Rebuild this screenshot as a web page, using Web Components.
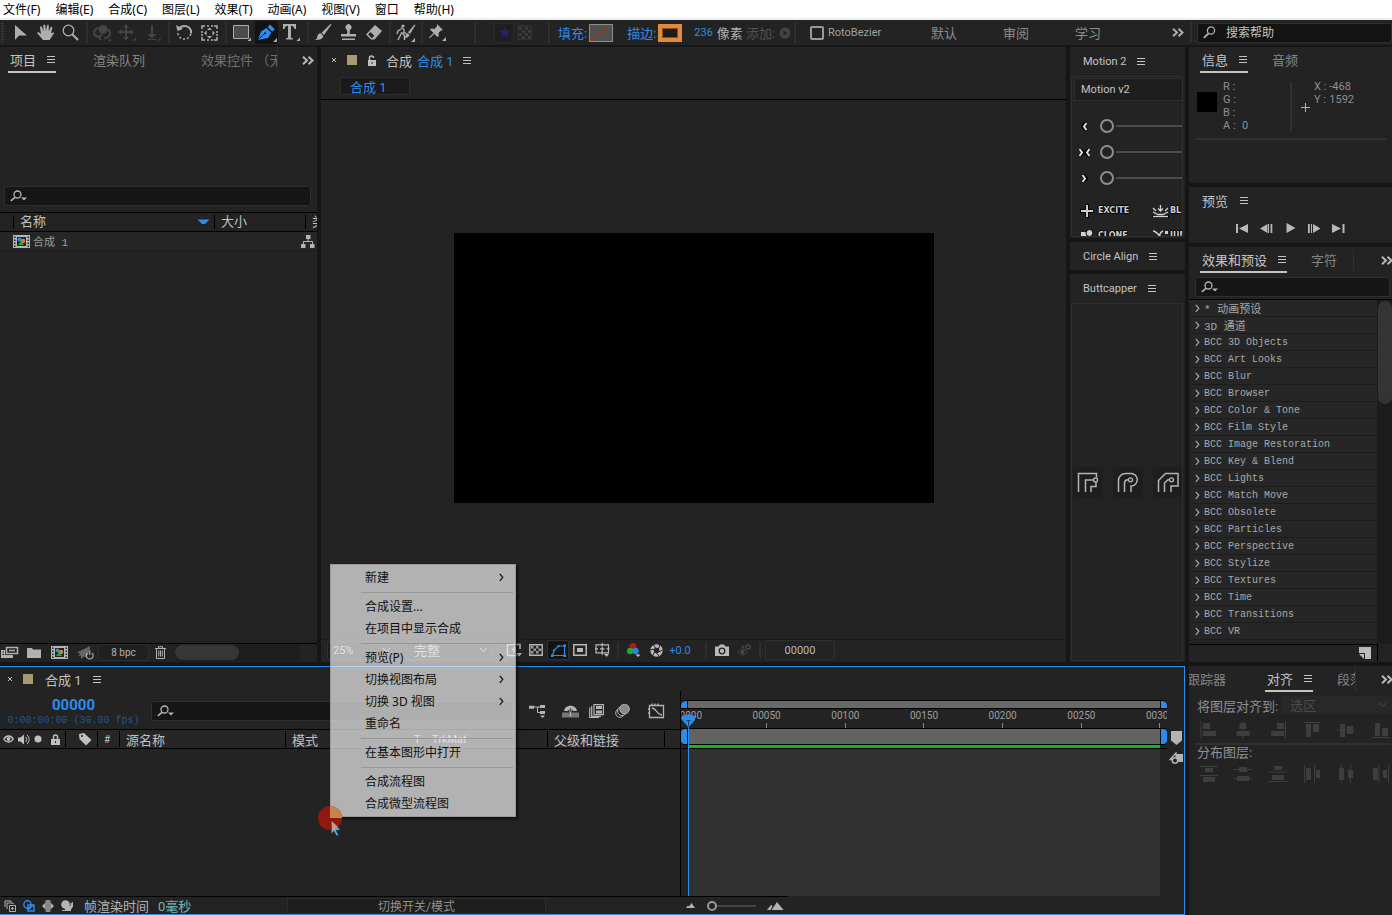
<!DOCTYPE html>
<html lang="zh-CN">
<head>
<meta charset="utf-8">
<title>合成 1</title>
<style>
html,body{margin:0;height:100%;background:#161616}
body{font-family:Roboto,"Noto Sans CJK SC",sans-serif;font-size:13px;color:#c0c0c0;overflow:hidden}
</style>
</head>
<body>
<ae-app></ae-app>
<script>
const BASE = `
*{box-sizing:border-box}
button,select,input{font:inherit;color:inherit;margin:0;padding:0;border:0;background:none;border-radius:0;outline:none}
button{display:inline-flex;align-items:center;justify-content:center;white-space:nowrap}
select{appearance:none}
`;

/* Every icon: [width, height, svg body], drawn on the pixel grid in currentColor */
const ICONS = {
  menu:[9,9,'<path d="M0 1.5h8M0 4.500h8M0 7.500h8" stroke="currentColor" fill="none"/>'],
  more:[12,9,'<path d="M1 .8l4 3.700-4 3.700M6.500 .8l4 3.700-4 3.700" stroke="currentColor" stroke-width="2" fill="none"/>'],
  close:[6,6,'<path d="M1 1l4 4M5 1l-4 4" stroke="currentColor" fill="none"/>'],
  lockopen:[10,11,'<path d="M2.500 5.500V3a2 2 0 014 0" stroke="currentColor" stroke-width="1.500" fill="none"/><path d="M1 5h8v6H1z" fill="currentColor"/><path d="M4.500 7h1v2h-1z" fill="#222"/>'],
  arrow:[14,18,'<path d="M1 1v15l4-4.500 8 0z" fill="currentColor"/>'],
  hand:[18,17,'<path d="M6 16c-2-2-4-5-6-7 1-1.500 2-1 4 1L3 3.500C3 2 4.500 2 5 3.200L6.500 7 6.300 1.500C6.500 0 8 0 8.300 1.500L9 7l1-5.500c.4-1.300 1.800-1 1.900.3L11.700 7.500l1.800-4c.5-1.200 2-.8 1.800.5L14 9.500c1-1 2.500-1.500 3.500-.5-2 1.500-3 5-5 7z" fill="currentColor"/>'],
  zoom:[17,17,'<circle cx="6.500" cy="6.500" r="5.300" stroke="currentColor" stroke-width="1.300" fill="none"/><path d="M10.500 10.500l5.500 5.500" stroke="currentColor" stroke-width="2"/>'],
  orbit:[19,17,'<circle cx="10" cy="5.500" r="4.500" fill="currentColor"/><path d="M5 4C-1 7 0 12 6 13l2-2M14 5c5 3 4 8-3 9.500M8 16l-2-3 3-2" stroke="currentColor" stroke-width="2" fill="none"/><path d="M18 14v3h-3z" fill="currentColor"/>'],
  pan:[19,17,'<path d="M8 0l3 3.500H9V7h3.500V5L16 8l-3.500 3V9H9v4h2l-3 3.500L5 13h2V9H3.500v2L0 8l3.500-3v2H7V3.500H5zM18 13.500v3h-3z" fill="currentColor"/>'],
  dolly:[17,17,'<path d="M7 1l2 0v9h3.500L8 14.500 3.500 10H7zM4 15h8v1H4zM16.500 13.500v3h-3z" fill="currentColor"/>'],
  rotate:[17,17,'<path d="M3.500 4A7 7 0 0115 6.500a7 7 0 010 3" stroke="currentColor" stroke-width="2" fill="none"/><path d="M0 1l1.500 6 5.500-2z" fill="currentColor"/><path d="M14.700 10A6.500 6.500 0 012 10V8" stroke="currentColor" stroke-width="1.500" stroke-dasharray="2 2" fill="none"/>'],
  anchor:[17,16,'<path d="M1 4V1h3M13 1h3v3M16 12v3h-3M4 15H1v-3M6 1h2M10 1h2M6 15h2M10 15h2M1 6v2M1 9v2M16 6v2M16 9v2" stroke="currentColor" stroke-width="1.500" fill="none"/><path d="M8.500 2.500L11 5H6zM8.500 13.500L11 11H6zM3 8l2.500-2.500v5zM14 8l-2.500-2.500v5z" fill="currentColor"/>'],
  rect:[19,17,'<path d="M1.500 1.500h15v13h-15z" fill="#4c4c4c" stroke="currentColor"/><path d="M19 13.500V17h-3.500z" fill="currentColor"/>'],
  pen:[20,18,'<path d="M1 16L4 7.500 9.500 4l4.800 4.800L11 14z" fill="currentColor"/><path d="M10.500 3L13 .5l4.800 4.800-2.500 2.500z" fill="currentColor"/><path d="M1.500 15.500L7 10" stroke="#131313" stroke-width=".8"/><circle cx="8" cy="9.300" r="1.100" fill="#131313"/><path d="M20 14v4h-4z" fill="#aaa"/>'],
  text:[19,17,'<path d="M1 0h13v5h-1.500C12 2.500 11 1.800 9 1.800V13c0 1 .7 1.200 2 1.300V15.500H4V14.300c1.300-.1 2-.3 2-1.300V1.800C4 1.800 3 2.500 2.500 5H1zM18 13.500V17h-3.500z" fill="currentColor"/>'],
  brush:[17,17,'<path d="M16.500.5L9 11l-2.500-2.300L15.500 0zM6 9.500L8.300 12c-.5 3-3.500 4-8.300 4 2-1 2-2 2.500-4C3 10 4.500 9 6 9.500z" fill="currentColor"/>'],
  stamp:[17,17,'<path d="M6.500 5.500a3 3 0 114 0c-1 1-1 3-.5 4.500H16v2.500H1V10h6c.5-1.500.5-3.500-.5-4.500zM2 14.500h13V16H2z" fill="currentColor"/>'],
  eraser:[18,17,'<path d="M10 1l7 6-7.500 8.500H6L1 10.500z" fill="currentColor"/><path d="M3 10.500L5.500 8l3.800 3.700-2.300 2.500z" fill="#252525"/>'],
  roto:[20,18,'<path d="M5 3.500l3 2v3l2 1M5 5L2 7l-1 3M6 8l-2 4-2 4M6.500 9l2 3v4" stroke="currentColor" stroke-width="1.400" fill="none"/><circle cx="7" cy="2" r="1.600" fill="currentColor"/><path d="M19.500 1L14 10l-2-1.800L18.500.5zM11.500 9l2 2c-.5 2-2.500 3-5 3 1.500-2 1-4.500 3-5zM19 14v4h-4z" fill="currentColor"/>'],
  pin:[18,17,'<path d="M8 0l6 6-2 .5-2.500 2.500.3 3L8.500 13 5.300 9.700 1 14l-1 0 .4-1L4.500 9 1 5.500 2.500 4.500l3 .4L8 2.300zM17 13v4h-4z" fill="currentColor"/>'],
  star:[11,12,'<path d="M5.500 0l1.600 3.800 3.900.3-3 2.700.9 4.200-3.400-2.200L2.100 11 3 6.800 0 4.100l3.900-.3z" fill="#23236a"/>'],
  checkdim:[15,15,'<path d="M1 1h13v13H1z" fill="none" stroke="#3a3a3a"/><path d="M2 2h3v3H2zM8 2h3v3H8zM5 5h3v3H5zM11 5h3v3h-3zM2 8h3v3H2zM8 8h3v3H8zM5 11h3v3H5zM11 11h3v3h-3z" fill="#3a3a3a"/>'],
  add:[12,12,'<circle cx="6" cy="6" r="5.500" fill="#434343"/><path d="M4.500 3.500v5l4-2.500z" fill="#222"/>'],
  search:[13,13,'<circle cx="8" cy="4.500" r="3.600" stroke="currentColor" stroke-width="1.300" fill="none"/><path d="M5.500 7.500L.8 11.800" stroke="currentColor" stroke-width="1.800"/>'],
  searchdrop:[18,12,'<circle cx="7.500" cy="4.500" r="3.500" stroke="currentColor" stroke-width="1.300" fill="none"/><path d="M5 7.300L.8 10.800" stroke="currentColor" stroke-width="1.600"/><path d="M11 7.500h6l-3 3z" fill="currentColor"/>'],
  sort:[13,6,'<path d="M.5 .5h12l-4.500 4.500h-3z" fill="#2d8ceb"/>'],
  comp:[17,13,'<path d="M0 0h17v13H0z" fill="#b5b5b5"/><path d="M1 1.500h1.500v1.500H1zM1 4.500h1.500V6H1zM1 7.500h1.500V9H1zM1 10.500h1.500V12H1zM14.500 1.500H16v1.500h-1.500zM14.500 4.500H16V6h-1.500zM14.500 7.500H16V9h-1.500zM14.500 10.500H16V12h-1.500zM4 2h9v9H4z" fill="#222"/><circle cx="6.500" cy="4.500" r="2" fill="#2d8ceb"/><circle cx="10" cy="6" r="2.300" fill="#e07838"/><path d="M5 10l3-4 3 4z" fill="#10b520"/>'],
  flow:[14,13,'<path d="M5 0h4.500v4H5zM0 9h4.500v4H0zM9 9h4.500v4H9z" fill="currentColor"/><path d="M7 4v3M2.500 9V6.500h9V9" stroke="currentColor" fill="none"/>'],
  interpret:[18,13,'<path d="M5.500 1.500h11v6h-11zM8 4.500h6" stroke="currentColor" stroke-width="1.600" fill="none"/><path d="M0 4h4v5h8v3H0z" fill="currentColor"/><path d="M1.500 6H3M1.500 8.500H3" stroke="#222"/>'],
  folder:[14,11,'<path d="M0 1h5l1 1.500h8V11H0z" fill="currentColor"/>'],
  rocket:[18,14,'<path d="M13 0L3 5 0 6l3 2-2 2 3-.5L4 13l3-2.500L9 11C12 8 13 4 13 0z" fill="#666"/><path d="M10.500 7a3.400 3.400 0 104.500 0M12.800 4.500v4.500" stroke="#aaa" stroke-width="1.200" fill="none"/>'],
  trash:[12,13,'<path d="M0 2.500h11M3.500 2V.7h4V2M1.500 3v9.500h8V3M3.800 4.500v6M5.500 4.500v6M7.300 4.500v6" stroke="currentColor" fill="none"/>'],
  chev:[9,6,'<path d="M.8 .8l3.700 3.700L8.200 .8" stroke="currentColor" fill="none"/>'],
  right:[5,9,'<path d="M.8 .8l3 3.500-3 3.500" stroke="currentColor" stroke-width="1.200" fill="none"/>'],
  fast:[17,14,'<path d="M14 6V1.500H1.500v11H11" stroke="currentColor" stroke-width="1.500" fill="none"/><path d="M9 3L5 7.500h2.500L7 11l4-4.500H8.500zM10 10h6l-3 3.500z" fill="currentColor"/>'],
  checker:[14,12,'<path d="M.8.800h12.400v10.400H.8z" fill="none" stroke="currentColor" stroke-width="1.400"/><path d="M2 2h2.500v2.500H2zM7 2h2.500v2.500H7zM4.500 4.500H7V7H4.500zM9.500 4.500H12V7H9.500zM2 7h2.500v2.500H2zM7 7h2.500v2.500H7z" fill="#999"/>'],
  mask:[15,13,'<path d="M1.500 11.500L3 6.500 7.500 2H13.500v9.500z" stroke="#2d8ceb" stroke-width="1.200" fill="none"/><path d="M0 10.500h2.500V13H0zM2 5.500h2V7.500H2zM6.500 1h2v2h-2zM12.500 .5H15V3h-2.500zM12.500 10.500H15V13h-2.500z" fill="#2d8ceb"/>'],
  safe:[14,12,'<path d="M.8.800h12.400v10.400H.8z" fill="none" stroke="currentColor" stroke-width="1.500"/><path d="M4 4h6v4H4z" fill="currentColor"/>'],
  grid:[15,15,'<path d="M1 1.800h12.500v8H1zM7.200 0v3.500M7.200 7.500V12M0 5.800h3M11.500 5.800h3M5 5.800h4.500M7.200 4v4" stroke="currentColor" stroke-width="1.200" fill="none"/><path d="M9 11h5l-2.500 3z" fill="currentColor"/>'],
  rgb:[14,14,'<circle cx="6" cy="3.500" r="3.400" fill="#b01c10"/><circle cx="3.200" cy="8" r="3.200" fill="#10b520"/><circle cx="8.500" cy="8" r="3.200" fill="#2d80e0"/><path d="M8.500 11.500h5l-2.500 2.500z" fill="#ccc"/>'],
  aperture:[13,13,'<circle cx="6.500" cy="6.500" r="4.500" stroke="currentColor" stroke-width="3.400" fill="none"/><path d="M3 .5l3 4M10 .5L8.500 5M12.500 6L8.500 8M9.500 12.500l-3-3.500M2.500 12l2-4M0 6l4.500-1" stroke="#232323"/>'],
  camera:[14,12,'<path d="M0 2.500h3.500L5 .5h4l1.500 2H14V12H0z" fill="currentColor"/><circle cx="7" cy="7" r="2.800" fill="none" stroke="#232323" stroke-width="1.300"/>'],
  eyecam:[14,13,'<path d="M1 8c3-4 7-4 9 0-2 4-6 4-9 0z" stroke="#484848" fill="none"/><circle cx="5.500" cy="8" r="2" fill="#484848"/><circle cx="11" cy="3" r="2" fill="none" stroke="#484848" stroke-width="1.500"/><circle cx="6" cy="3" r="1.500" fill="#404040"/>'],
  mleft:[7,9,'<path d="M5.500 .5L2 4.500l3.500 4" stroke="#000" stroke-width="4" fill="none"/><path d="M5.500 1L3 4.500l2.500 3.500" stroke="#ddd" stroke-width="2" fill="none"/>'],
  mright:[7,9,'<path d="M1.500 .5L5 4.500l-3.500 4" stroke="#000" stroke-width="4" fill="none"/><path d="M1.500 1L4 4.500l-2.500 3.500" stroke="#ddd" stroke-width="2" fill="none"/>'],
  mboth:[13,9,'<path d="M1.500 .5L5 4.500l-3.500 4M11.500 .5L8 4.500l3.500 4" stroke="#000" stroke-width="3.500" fill="none"/><path d="M1.500 1L4 4.500l-2.500 3.500M11.500 1L9 4.500l2.500 3.500" stroke="#ddd" stroke-width="2" fill="none"/>'],
  plus:[14,14,'<path d="M7 0v14M0 7h14" stroke="#000" stroke-width="4"/><path d="M7 1v12M1 7h12" stroke="#d0d0d0" stroke-width="2"/>'],
  blend:[17,14,'<path d="M0 11h17v3H0z" fill="#000"/><path d="M1 12.500h15M8.500 1v6M6 4.500L8.500 7 11 4.500M1 4l3 3M16 4l-3 3M1 8l5 2.500h5L16 8" stroke="#d0d0d0" stroke-width="1.300" fill="none"/>'],
  clone:[14,14,'<path d="M1 3h6v8H1z" fill="#d0d0d0"/><circle cx="9.500" cy="4" r="3.500" fill="#d0d0d0" stroke="#000"/>'],
  jump:[17,14,'<path d="M1 2c4 0 6 6 12 8M6 8c2-2 2-5 5-6" stroke="#d0d0d0" stroke-width="1.500" fill="none"/><path d="M13 2h3v3h-3z" fill="#d0d0d0"/>'],
  cap1:[22,22,'<path d="M1.500 21V2.500h18v4M19 10.500v5h-5V21M8.500 21V9h8" stroke="currentColor" stroke-width="1.500" fill="none"/><circle cx="18.500" cy="9" r="2" stroke="currentColor" stroke-width="1.300" fill="#1e1e1e"/>'],
  cap2:[22,22,'<path d="M1.500 21V9.500A7 7 0 018.500 2.500H14a6.200 6.200 0 010 12.500V21M7.500 21V12A3.500 3.500 0 0111 8.800" stroke="currentColor" stroke-width="1.500" fill="none"/><circle cx="13.500" cy="8.800" r="2" stroke="currentColor" stroke-width="1.300" fill="#1e1e1e"/>'],
  cap3:[22,22,'<path d="M1.500 21V9.500l7-7h12.500v12.500h-7V21M7.500 21V12l3.500-3.200h1" stroke="currentColor" stroke-width="1.500" fill="none"/><circle cx="14.500" cy="8.800" r="2" stroke="currentColor" stroke-width="1.300" fill="#1e1e1e"/>'],
  first:[13,9,'<path d="M0 0h2v9H0zM12 0v9L3 4.500z" fill="currentColor"/>'],
  prev:[13,9,'<path d="M0 4.500L7.500 0v9zM8 0h1v9H8zM10.500 0h1.800v9h-1.800z" fill="currentColor"/>'],
  play:[10,10,'<path d="M.5 0v10L9.500 5z" fill="currentColor"/>'],
  next:[13,9,'<path d="M12.500 4.500L5 0v9zM3 0h1v9H3zM0 0h1.800v9H0z" fill="currentColor"/>'],
  last:[13,9,'<path d="M10.500 0h2v9h-2zM0 0v9l9-4.500z" fill="currentColor"/>'],
  newbin:[12,12,'<path d="M0 0h12v12H6V6H0z" fill="currentColor"/><path d="M0 7l5 0 0 5z" fill="currentColor"/>'],
  cross:[9,9,'<path d="M4.500 0v9M0 4.500h9" stroke="currentColor" fill="none"/>'],
  eye:[11,8,'<path d="M.8 4c2.500-4 7-4 9.400 0-2.400 4-6.900 4-9.400 0z" stroke="currentColor" stroke-width="1.300" fill="none"/><circle cx="5.500" cy="4" r="1.900" fill="currentColor"/>'],
  sound:[12,11,'<path d="M0 3.500h2.500L6 .5v10L2.500 7.500H0z" fill="currentColor"/><path d="M7.500 3c1.500 1.500 1.500 3.500 0 5M9 1c2.800 2.500 2.800 6.500 0 9" stroke="currentColor" fill="none"/>'],
  dot:[8,8,'<circle cx="4" cy="4" r="3.500" fill="currentColor"/>'],
  lock:[9,11,'<path d="M2.500 5V3a2 2 0 014 0v2" stroke="currentColor" stroke-width="1.500" fill="none"/><path d="M0 5h9v6H0z" fill="currentColor"/><path d="M4 7h1v2H4z" fill="#222"/>'],
  tag:[13,13,'<path d="M0 1l5-1 7.500 7-5.500 5.500L.5 6z" fill="currentColor"/><circle cx="3" cy="3" r="1" fill="#222"/>'],
  tree:[17,13,'<path d="M0 .8h5v3H0zM11 0h5v3h-5zM11 6h5v3h-5zM11 10.500h5L13.500 13z" fill="currentColor"/><path d="M5 2h6M8.500 2v5.500H11" stroke="currentColor" fill="none"/>'],
  shy:[17,13,'<path d="M0 7.500h7v5H0zM10 7.500h7v5h-7zM0 9.500h17v3H0z" fill="#777"/><path d="M2 6C3 -1 14 -1 15 6H11L9.500 4v7h-2V4L6 6z" fill="currentColor"/><path d="M8.500 3v4" stroke="#232323" stroke-width=".6"/>'],
  frames:[15,14,'<path d="M5 .6h9.400v10H5z" fill="none" stroke="currentColor" stroke-width="1.200"/><path d="M7 2h6v3H7zM7 6.500h6v3H7z" fill="currentColor"/><path d="M2.700 2v10.300H12M.7 3.500v10H10" stroke="currentColor" stroke-width="1.200" fill="none"/>'],
  blur:[15,14,'<circle cx="5" cy="9" r="4.300" stroke="currentColor" fill="none"/><circle cx="7" cy="7" r="4.500" fill="#232323" stroke="currentColor"/><circle cx="9.500" cy="5" r="4.800" fill="#8a8a8a" stroke="currentColor"/>'],
  graph:[17,16,'<path d="M1.500 2.500h14v12h-14zM4 5c4 0 5 7 10 7M4 .5v2M7 .5v2M10 .5v2M0 6h2M0 10h2" stroke="currentColor" stroke-width="1.300" fill="none"/>'],
  marker:[11,14,'<path d="M0 0h11v9.500L5.500 14 0 9.500z" fill="currentColor"/>'],
  comptn:[14,12,'<path d="M7 2h7v8H7z" fill="currentColor"/><path d="M7 1L1 7.500h6z" fill="#232323" stroke="currentColor" stroke-width="1.300"/><circle cx="6" cy="8.500" r="2.700" fill="#232323" stroke="currentColor" stroke-width="1.500"/>'],
  head:[13,14,'<path d="M0 1.500h4L6.500 0 9 1.500h4V6L6.500 13.500 0 6z" fill="#2d8ceb"/><path d="M4.500 6.500h4M6.500 6.500v6" stroke="#173f6a"/>'],
  sw1:[12,12,'<path d="M1 7V1h6v1M3 9V3h6v1M5.500 5.500h6v6h-6zM8.500 7v3M7 8.500h3" stroke="currentColor" fill="none"/>'],
  sw2:[12,12,'<circle cx="4.500" cy="4.500" r="3.700" stroke="#2d8ceb" stroke-width="1.400" fill="none"/><path d="M5 5h6v6H5z" stroke="#2d8ceb" stroke-width="1.400" fill="none"/><path d="M5 11V9l4-4h2z" fill="#2d8ceb"/>'],
  sw3:[12,12,'<path d="M3.500 0h5v12h-5z" fill="#8a8a8a"/><path d="M0 6l3.500-3.500v7zM12 6L8.500 2.500v7z" fill="currentColor"/>'],
  sw4:[13,12,'<circle cx="4.500" cy="4.500" r="4.300" fill="currentColor"/><path d="M4 6h5.500V1.500l1 2 1.500-2V6.500L10 9.500V11H1V10h3z" fill="currentColor"/>'],
  mtsmall:[9,5,'<path d="M0 5l2-2.500L3 3.500 5.500 0 9 5z" fill="currentColor"/>'],
  mtlarge:[17,8,'<path d="M0 8l4-5 1.500 1L3.500 8zM4.500 8L10 0l6.500 8z" fill="currentColor"/>'],
  a1:[18,18,'<path d="M1 0v18" stroke="currentColor"/><path d="M3 2h7v6H3zM3 10h13v5H3z" fill="currentColor"/>'],
  a2:[18,18,'<path d="M9 0v18" stroke="currentColor"/><path d="M5.500 2h7v6h-7zM2.500 10h13v5h-13z" fill="currentColor"/>'],
  a3:[18,18,'<path d="M16.500 0v18" stroke="currentColor"/><path d="M8 2h7v6H8zM2 10h13v5H2z" fill="currentColor"/>'],
  a4:[18,18,'<path d="M0 1.500h18" stroke="currentColor"/><path d="M3 3h5v13H3zM10 3h6v8h-6z" fill="currentColor"/>'],
  a5:[18,18,'<path d="M0 9h18" stroke="currentColor"/><path d="M3 3h5v13H3zM10 5h6v8h-6z" fill="currentColor"/>'],
  a6:[18,18,'<path d="M0 16.500h18" stroke="currentColor"/><path d="M3 2h5v13H3zM10 7h6v8h-6z" fill="currentColor"/>'],
  d1:[18,18,'<path d="M0 1.500h18M0 10.500h18" stroke="currentColor"/><path d="M5 3h8v4H5zM3 12h12v5H3z" fill="currentColor"/>'],
  d2:[18,18,'<path d="M0 4.500h18M0 13.500h18" stroke="currentColor"/><path d="M5 2h8v5H5zM3 11h12v5H3z" fill="currentColor"/>'],
  d3:[18,18,'<path d="M0 7h18M0 16.500h18" stroke="currentColor"/><path d="M5 1h8v4H5zM3 10h12v5H3z" fill="currentColor"/>'],
  d4:[18,18,'<path d="M1.500 0v18M11.500 0v18" stroke="currentColor"/><path d="M3 3h5v12H3zM13 5h4v8h-4z" fill="currentColor"/>'],
  d5:[18,18,'<path d="M4.500 0v18M13.500 0v18" stroke="currentColor"/><path d="M2 3h5v12H2zM11 5h5v8h-5z" fill="currentColor"/>'],
  d6:[18,18,'<path d="M7 0v18M16.500 0v18" stroke="currentColor"/><path d="M1 3h5v12H1zM11 5h4v8h-4z" fill="currentColor"/>']
};

/* Base: a shadow root filled from the class's css and html */
class AE extends HTMLElement {
  constructor(){
    super();
    const t = document.createElement('template');
    t.innerHTML = `<style>${BASE}${this.constructor.css}</style>${this.constructor.html}`;
    this.attachShadow({mode:'open'}).append(t.content.cloneNode(true));
  }
}
const define = (name, css, html) =>
  customElements.define(name, class extends AE { static css = css; static html = html; });
const ic = n => `<ae-icon name="${n}"></ae-icon>`;

customElements.define('ae-icon', class extends AE {
  static css = ':host{display:inline-flex;flex:none}svg{display:block}';
  static html = '<svg aria-hidden="true"></svg>';
  connectedCallback(){
    const [w,h,body] = ICONS[this.getAttribute('name')];
    const svg = this.shadowRoot.querySelector('svg');
    svg.setAttribute('width', w);
    svg.setAttribute('height', h);
    svg.setAttribute('viewBox', `0 0 ${w} ${h}`);
    svg.innerHTML = body;
  }
});

/* Tab: title, and a menu glyph and underline when active */
define('ae-tab', `
:host{display:block;flex:none;color:#858585;height:26px;white-space:nowrap;overflow:hidden}
:host([latin]){font-size:11px}
:host([active]),:host([latin]){color:#c4c4c4}
button{height:26px;gap:11px;border-bottom:2px solid transparent}
ae-icon{display:none}
:host([active]) ae-icon,:host([latin]) ae-icon{display:inline-flex}
:host([latin]) button{border:0;padding-top:2px}
:host([active]) button{padding-left:2px;border-bottom-color:#c4c4c4}
`, `<button role="tab"><slot></slot>${ic('menu')}</button>`);

/* Panel: strip of tabs over free content */
define('ae-panel', `
:host{display:flex;flex-direction:column;background:#232323;min-width:0;min-height:0;overflow:hidden}
header{display:flex;align-items:flex-start;flex:none;height:28px;padding:0 1px 0 var(--pad,11px);gap:var(--gap,24px)}
`, `<header role="tablist"><slot name="tabs"></slot></header><slot></slot>`);

/* Button at the end of a tab strip that lists the hidden tabs */
define('ae-more', `:host{display:flex;margin-left:auto;height:26px;align-items:center;color:#b8b8b8}`,
  `<button aria-label="更多">${ic('more')}</button>`);

define('ae-search', `
:host{display:flex;align-items:center;height:20px;background:#161616;border:1px solid #2e2e2e;border-radius:2px;padding-left:5px;color:#b4b4b4;min-width:0}
input{flex:1;min-width:0;height:18px}
`, `${ic('searchdrop')}<input type="search" aria-label="搜索">`);

define('ae-menubar', `
:host{display:block;flex:none;height:20px;background:#fff;border-bottom:2px solid #eef0ee;color:#000;font:12px "Noto Sans","Noto Sans CJK SC",sans-serif}
nav{display:flex;gap:15px;padding-left:3px;height:18px;align-items:center}
button{height:18px}
`, `<nav>${['文件(F)','编辑(E)','合成(C)','图层(L)','效果(T)','动画(A)','视图(V)','窗口','帮助(H)'].map(t=>`<button>${t}</button>`).join('')}</nav>`);

const tools = l => l.map(n => `<button class="t ${n}" aria-label="${n}">${ic(n)}</button>`).join('');
define('ae-toolbar', `
:host{display:flex;align-items:center;flex:none;height:27px;background:repeating-linear-gradient(#3a3a3a 0 1px,#232323 1px 2px) 1px 3px/3px 19px no-repeat #232323;border-bottom:2px solid #161616;color:#aeaeae;padding-left:8px;white-space:nowrap}
.t{width:25px;height:23px;flex:none}
.orbit,.pan,.dolly{color:#454545}
.pen{color:#2d8ceb;background:#131313;border-radius:2px;width:23px;margin:0 1px}
i{width:2px;height:21px;background:#2f2f2f;margin:0 2px 0 3px;flex:none}
.opts{display:flex;align-items:center;flex:1;min-width:0}
.star{width:20px;height:20px;background:#1e1e1e;border:1px solid #2b2b2b}
.lbl{color:#2d8ceb}
.sw{width:24px;height:18px;border:1px solid #8a9088;background:linear-gradient(to bottom right,transparent 47%,#a83020 48% 52%,transparent 53%) #505050}
.sk{width:24px;height:18px;border:4px solid #e08a40;background:#1c1c1c;outline:1px solid #8a4d1c;outline-offset:-5px}
.num{color:#2d8ceb;font-size:11px}
label{display:flex;align-items:center;gap:4px;font-size:11px;color:#a0a0a0}
input[type=checkbox]{appearance:none;width:14px;height:14px;border:2px solid #9a9a9a;border-radius:2px}
.ws{display:flex;gap:46px;color:#8c8c8c;flex:none}
.help{display:flex;align-items:center;width:195px;height:20px;margin-left:3px;background:#131313;border:1px solid #2e2e2e;border-radius:2px;padding-left:5px;gap:10px;flex:none}
.help input{flex:1;min-width:0;font-size:12px;color:#c4c4c4}
.help input::placeholder{color:#c4c4c4;opacity:1}
`, `${tools(['arrow','hand','zoom'])}<i></i>${tools(['orbit','pan','dolly'])}<i></i>${tools(['rotate','anchor'])}<i></i>${tools(['rect','pen','text'])}<i></i>${tools(['brush','stamp','eraser'])}<i></i>${tools(['roto'])}<i></i>${tools(['pin'])}
<i style="margin-left:24px"></i>
<div class="opts"><button class="star" aria-label="星形" style="margin-left:16px">${ic('star')}</button><button aria-label="蒙版" style="margin-left:3px">${ic('checkdim')}</button>
<i style="margin-left:16px"></i>
<button class="lbl" style="margin-left:6px">填充:</button><button class="sw" aria-label="填充颜色" style="margin-left:2px"></button>
<button class="lbl" style="margin-left:14px">描边:</button><button class="sk" aria-label="描边颜色" style="margin-left:2px"></button>
<button class="num" style="margin-left:12px">236</button><span style="margin-left:4px">像素</span><span style="color:#505050;margin-left:3px">添加:</span><button aria-label="添加" style="margin-left:4px">${ic('add')}</button>
<i></i><label style="margin-left:12px"><input type="checkbox">RotoBezier</label></div>
<div class="ws"><button>默认</button><button>审阅</button><button>学习</button></div>
<button aria-label="更多工作区" style="margin-left:71px">${ic('more')}</button><i style="margin-left:6px"></i>
<div class="help">${ic('search')}<input type="search" placeholder="搜索帮助" aria-label="搜索帮助"></div>`);

define('ae-project', `
:host{display:flex;min-width:0;min-height:0}
ae-panel{flex:1;--pad:8px;--gap:0px}
.second{margin:0 56px 0 37px}
.third{width:77px;border-right:1px solid #2f2f2f;color:#6e7170}
.info{flex:none;height:111px}
ae-search{margin:0 6px 6px 4px;flex:none}
table{border-collapse:separate;border-spacing:0;table-layout:fixed;width:100%;flex:none}
th{height:20px;padding:0;font-weight:400;text-align:left;border:solid #000;border-width:1px 0;overflow:hidden;white-space:nowrap;line-height:18px}
th div{display:flex;align-items:center;height:14px;border-left:1px solid #000;padding:0 4px 0 6px;justify-content:space-between}
td{height:19px;padding:0;border-bottom:1px solid #1e1e1e;background:#262626;color:#9c9c9c;font:11px "Liberation Mono","Noto Sans CJK SC",monospace}
td div{display:flex;align-items:center;gap:3px;height:17px}
.fill{flex:1}
footer{display:flex;align-items:center;flex:none;height:18px;border-top:1px solid #000;margin-bottom:1px;color:#b0b0b0}
.bpc{width:51px;height:17px;border:1px solid #2d2d2d;border-radius:2px;font-size:10px;background:#202020;margin:0 6px 0 3px}
.thumb{width:64px;height:15px;border-radius:8px;background:#363636}
.track{flex:1;background:#1e1e1e;height:16px;margin:0 17px 0 8px}
`, `<ae-panel>
<ae-tab slot="tabs" active>项目</ae-tab><ae-tab slot="tabs" class="second">渲染队列</ae-tab><ae-tab slot="tabs" class="third">效果控件 （无）</ae-tab><ae-more slot="tabs" style="margin-right:2px"></ae-more>
<div class="info"></div><ae-search></ae-search>
<table><colgroup><col style="width:13px"><col><col style="width:91px"><col style="width:12px"></colgroup>
<thead><tr><th></th><th><div>名称${ic('sort')}</div></th><th><div>大小</div></th><th><div>类型</div></th></tr></thead>
<tbody><tr><td></td><td><div>${ic('comp')}合成 1</div></td><td colspan="2"><div style="justify-content:flex-end;padding-right:2px;color:#b4b4b4">${ic('flow')}</div></td></tr></tbody></table>
<div class="fill"></div>
<footer><button aria-label="解释素材" style="margin-left:1px">${ic('interpret')}</button><button aria-label="新建文件夹" style="margin-left:8px">${ic('folder')}</button><button aria-label="新建合成" style="margin-left:10px">${ic('comp')}</button><button aria-label="GPU" style="margin-left:9px">${ic('rocket')}</button><button class="bpc">8 bpc</button><button aria-label="删除">${ic('trash')}</button><div class="track"><div class="thumb"></div></div></footer>
</ae-panel>`);

define('ae-composition', `
:host{display:flex;min-width:0;min-height:0}
ae-panel{flex:1;--pad:10px;--gap:0px}
.title{display:flex;align-items:center;height:26px}
.chip{width:10px;height:10px;background:#a89a70}
b{font-weight:400;color:#2d8ceb}
.crumb{flex:none;height:25px;padding:2px 0 0 19px;border-bottom:1px solid #000}
.crumb button{width:70px;height:18px;background:#1a1a1a;border:1px solid #2c2c2c;border-radius:2px;color:#2d8ceb;justify-content:flex-start;padding-left:9px}
.view{flex:1;display:grid;place-items:center;padding-bottom:3px;min-height:0}
.canvas{width:65%;max-width:480px;aspect-ratio:16/9;background:#000}
footer{display:flex;align-items:center;flex:none;height:23px;border-top:1px solid #1b1b1b;padding:0 0 2px 6px;color:#b8b8b8;white-space:nowrap}
.sel{display:flex;align-items:center;height:19px;border:1px solid #303030;border-radius:2px;background:#1e1e1e;padding:0 4px 0 5px;color:#c0c0c0}
.sel select{flex:1;min-width:0}
footer>button{width:22px;height:20px;flex:none}
.on{background:#131313;border:1px solid #303030;border-radius:2px}
i{width:2px;height:16px;background:#2f2f2f;flex:none}
footer>.ev{color:#2d8ceb;font-size:11px;width:26px}
footer>.fr{width:70px;height:20px;border:1px solid #303030;border-radius:2px;font-size:11px;margin-left:4px}
`, `<ae-panel><div slot="tabs" class="title"><button aria-label="关闭">${ic('close')}</button><span class="chip" style="margin-left:10px"></span>
<button aria-label="锁定" style="margin-left:10px">${ic('lockopen')}</button><span style="margin:0 5px 0 9px">合成</span><b>合成 1</b><button aria-label="菜单" style="margin-left:9px">${ic('menu')}</button></div>
<div class="crumb"><button>合成 1</button></div>
<div class="view"><div class="canvas"></div></div>
<footer><span class="sel" style="width:69px;font-size:11px"><select aria-label="放大率"><option>25%</option></select>${ic('chev')}</span>
<span class="sel" style="width:87px;margin:0 10px 0 10px;padding-left:7px"><select aria-label="分辨率"><option>完整</option></select>${ic('chev')}</span>
<button aria-label="快速预览">${ic('fast')}</button><button aria-label="透明网格">${ic('checker')}</button><button class="on" aria-label="蒙版可见性">${ic('mask')}</button><button aria-label="目标区域">${ic('safe')}</button><button aria-label="参考线">${ic('grid')}</button>
<i style="margin:0 4px"></i><button aria-label="通道">${ic('rgb')}</button><button aria-label="曝光">${ic('aperture')}</button><button class="ev">+0.0</button>
<i style="margin:0 4px 0 12px"></i><button aria-label="快照">${ic('camera')}</button><button aria-label="显示快照">${ic('eyecam')}</button><i style="margin-left:4px"></i><button class="fr">00000</button></footer></ae-panel>`);

const slide = n => `<label>${ic(n)}<input type="range" min="0" max="100" value="0" aria-label="${n}"></label>`;
define('ae-scripts', `
:host{display:flex;flex-direction:column;gap:4px;min-width:0;min-height:0}
ae-panel{--pad:13px;flex:none}
.box{border:1px solid #2e2e2e;border-radius:2px;margin:1px 2px 1px 1px;overflow:hidden}
.m{height:161px;padding:1px 0 0 2px}
.name{height:23px;width:100%;border:1px solid #2e2e2e;border-right:0;background:#1e1e1e;font-size:11px;justify-content:flex-start;padding-left:6px;color:#c4c4c4;margin-bottom:12px}
label{display:flex;align-items:center;height:26px;padding-left:4px}
label ae-icon{width:13px;justify-content:center}
input{appearance:none;flex:1;min-width:0;height:14px;margin-left:9px;background:linear-gradient(#4c4c4c,#4c4c4c) 16px 6px/100% 2px no-repeat}
input::-webkit-slider-thumb{appearance:none;width:14px;height:14px;border:2px solid #8e8e8e;border-radius:50%;background:#232323}
.btns{display:grid;grid-template-columns:72px 72px;grid-auto-rows:25px;margin-top:7px;font:bold 8px "DejaVu Sans",sans-serif;color:#d0d0d0}
.btns button{justify-content:flex-start;gap:4px;padding-left:6px;text-shadow:1px 0 #000,-1px 0 #000,0 1px #000,0 -1px #000}
.btns button:nth-child(even){gap:1px}
.last{flex:1}
.caps{flex:1;display:flex;align-items:center;gap:10px;padding-left:1px}
.caps button{width:30px;height:30px;background:#1e1e1e;color:#b4b4b4;flex:none}
`, `<ae-panel><ae-tab slot="tabs" latin>Motion 2</ae-tab><div class="box m"><button class="name">Motion v2</button>${slide('mleft')}${slide('mboth')}${slide('mright')}
<div class="btns"><button>${ic('plus')}EXCITE</button><button>${ic('blend')}BLEND</button><button>${ic('clone')}CLONE</button><button>${ic('jump')}JUMP</button></div></div></ae-panel>
<ae-panel><ae-tab slot="tabs" latin>Circle Align</ae-tab></ae-panel>
<ae-panel class="last"><ae-tab slot="tabs" latin>Buttcapper</ae-tab><div class="box caps"><button aria-label="直角">${ic('cap1')}</button><button aria-label="圆角">${ic('cap2')}</button><button aria-label="切角">${ic('cap3')}</button></div></ae-panel>`);

define('ae-info', `
:host{display:flex;min-width:0}
ae-panel{flex:1}
.row{display:flex;font-size:11px;line-height:13px;color:#8e8e8e;margin:5px 6px 0 6px;padding-left:2px;height:60px;border-bottom:2px solid #303030}
.sw{width:20px;height:20px;background:#000;margin-top:12px}
dl{display:grid;grid-template-columns:auto auto;grid-auto-rows:13px;gap:0 5px;margin:0 0 0 6px;align-content:start}
dt,dd{margin:0;white-space:pre}
hr{width:2px;height:49px;border:0;background:#303030;margin:2px 0 0 0}
`, `<ae-panel><ae-tab slot="tabs" active>信息</ae-tab><ae-tab slot="tabs">音频</ae-tab>
<div class="row"><div class="sw"></div><dl style="width:67px;grid-template-columns:14px 1fr"><dt>R :</dt><dd></dd><dt>G :</dt><dd></dd><dt>B :</dt><dd></dd><dt>A :</dt><dd>0</dd></dl><hr><span style="margin:22px 0 0 9px;color:#b4b4b4">${ic('cross')}</span><dl style="margin-left:4px;gap:0 3px"><dt>X :</dt><dd>-468</dd><dt>Y :</dt><dd>1592</dd></dl></div></ae-panel>`);

define('ae-preview', `
:host{display:flex;min-width:0}
ae-panel{flex:1;--pad:13px}
.t{display:flex;align-items:center;gap:12px;height:26px}
.b{display:flex;justify-content:center;align-items:center;gap:4px;height:26px}
.b button{width:20px;height:20px;color:#b8b8b8}
`, `<ae-panel><div slot="tabs" class="t">预览<button aria-label="菜单">${ic('menu')}</button></div><div class="b">${['first','prev','play','next','last'].map(n=>`<button aria-label="${n}">${ic(n)}</button>`).join('')}</div></ae-panel>`);

define('ae-effects', `
:host{display:flex;min-height:0;min-width:0}
ae-panel{flex:1}
.sep{width:1px;height:21px;margin:3px 0 0 -8px;background:#303030}
ae-more{margin-right:-2px}
ae-search{margin:2px 2px 2px 6px;flex:none}
.wrap{display:flex;flex:1;min-height:0;border-top:1px solid #000;margin-left:1px}
ul{list-style:none;margin:0;padding:0;flex:1;min-width:0;overflow:hidden;font:10px "Liberation Mono","Noto Sans CJK SC",monospace;color:#a8a8a8}
li{display:flex;align-items:center;gap:4px;height:17px;padding-left:5px;border-bottom:1px solid #1c1c1c;background:#262626;white-space:pre}
li.zh{font-size:11px}
.bar{width:15px;flex:none;background:#1c1c1c;padding:1px 0 0 1px}
.bar div{height:103px;border-radius:7px;background:#343434}
footer{display:flex;flex:none;align-items:center;justify-content:flex-end;height:17px;border:solid #000;border-width:1px 1px 0 0;margin:0 14px 1px 1px;padding-right:6px;color:#bcbcbc}
`, `<ae-panel><ae-tab slot="tabs" active>效果和预设</ae-tab><ae-tab slot="tabs">字符</ae-tab><div slot="tabs" class="sep"></div><ae-more slot="tabs"></ae-more>
<ae-search></ae-search><div class="wrap"><ul>
<li class="zh">${ic('right')}* 动画预设</li><li class="zh">${ic('right')}3D 通道</li>
${['3D Objects','Art Looks','Blur','Browser','Color & Tone','Film Style','Image Restoration','Key & Blend','Lights','Match Move','Obsolete','Particles','Perspective','Stylize','Textures','Time','Transitions','VR'].map(t=>`<li>${ic('right')}BCC ${t.replace('&','&amp;')}</li>`).join('')}
</ul><div class="bar"><div></div></div></div><footer><button aria-label="新建动画预设">${ic('newbin')}</button></footer></ae-panel>`);

define('ae-align', `
:host{display:flex;min-height:0;min-width:0}
ae-panel{flex:1;--pad:0px;--gap:0px}
.l{width:37px;direction:rtl}
.r{width:19px;margin-left:24px;border-right:1px solid #303030}
ae-more{margin-right:-2px}
.to{display:flex;align-items:center;height:22px;padding-left:8px;color:#909090;white-space:nowrap}
.sel{display:flex;flex:1;align-items:center;margin-left:3px;height:18px;background:#282828;padding:0 5px 0 9px;color:#4a4a4a;min-width:0}
.sel select{flex:1;min-width:0}
.ic{display:grid;grid-template-columns:repeat(6,minmax(0,1fr));height:28px;align-items:center;color:#3b3f40;margin:0 -6px 0 3px}
.ic button{width:100%}
.ln{height:2px;background:#303030;margin:-1px 1px 0 6px}
.d{line-height:14px;padding-left:8px;color:#909090;margin-top:1px}
`, `<ae-panel><ae-tab slot="tabs" class="l">跟踪器</ae-tab><ae-tab slot="tabs" active style="margin-left:39px">对齐</ae-tab><ae-tab slot="tabs" class="r">段落</ae-tab><ae-more slot="tabs"></ae-more>
<label class="to">将图层对齐到:<span class="sel"><select><option>选区</option></select>${ic('chev')}</span></label>
<div class="ic">${[1,2,3,4,5,6].map(n=>`<button aria-label="对齐 ${n}">${ic('a'+n)}</button>`).join('')}</div><div class="ln"></div>
<div class="d">分布图层:</div>
<div class="ic">${[1,2,3,4,5,6].map(n=>`<button aria-label="分布 ${n}">${ic('d'+n)}</button>`).join('')}</div></ae-panel>`);

/* Ruler, work area and track space of the timeline */
define('ae-tracks', `
:host{display:flex;flex:1;min-width:0;position:relative}
.main{flex:1;min-width:0;display:flex;flex-direction:column;overflow:hidden;padding-top:9px;border-left:1px solid #000}
.nav{height:9px;flex:none;border:solid #000;border-width:1px 0;background:linear-gradient(90deg,#2d8ceb 6px,#111 6px 7px,#696a67 7px calc(100% - 7px),#111 calc(100% - 7px) calc(100% - 6px),#2d8ceb 0);border-radius:5px 5px 0 0}
.ruler{height:19px;flex:none;overflow:hidden;font-size:10px;color:#9e9e9e}
.in{padding:0 7px}
.r2{display:grid;grid-template-columns:repeat(7,1fr);width:116.6667%;margin-left:-8.3333%;text-align:center;line-height:13px}
.r2 span::after{content:"";display:block;width:1px;height:5px;background:#888;margin:1px auto 0}
.work{height:17px;flex:none;border:solid #000;border-width:1px 0;background:linear-gradient(90deg,#2d8ceb 6px,#111 6px 7px,#626262 7px calc(100% - 7px),#111 calc(100% - 7px) calc(100% - 6px),#2d8ceb 0);border-radius:4px}
.green{height:3px;flex:none;background:#14b81e;margin:0 7px}
.body{flex:1;border-top:1px solid #000;padding:0 7px}
.body div{height:100%;background:#313131}
.side{width:17px;display:flex;flex-direction:column;align-items:center;color:#b4b4b4;padding:40px 0 0 1px;gap:7px;flex:none}
.ph{position:absolute;left:8px;top:23px;bottom:0;width:1px;background:#2d8ceb}
.ph ae-icon{position:absolute;left:-6px;top:0}
`, `<div class="main"><div class="nav"></div><div class="ruler"><div class="in"><div class="r2">${[0,50,100,150,200,250,300].map(n=>`<span>${String(n).padStart(5,'0')}</span>`).join('')}</div></div></div>
<div class="work"></div><div class="green"></div><div class="body"><div></div></div></div>
<div class="side">${ic('marker')}${ic('comptn')}</div><div class="ph">${ic('head')}</div>`);

define('ae-timeline', `
:host{display:flex;flex-direction:column;background:#232323;border:1px solid #2d8ceb;border-left:0;min-width:0;min-height:0}
.tab{display:flex;align-items:center;height:24px;flex:none;padding-left:7px;color:#c4c4c4}
.chip{width:10px;height:10px;background:#a89a70;margin:0 12px 0 10px}
.grid{display:flex;flex:1;min-height:0}
.left{width:680px;flex:none;display:flex;flex-direction:column;padding-top:4px}
.top{display:flex;align-items:flex-start;height:34px;flex:none}
.time{width:151px;flex:none;text-align:center;padding:2px 4px 0 0;color:#2d8ceb;line-height:16px;font-size:15px;font-weight:700}
.time small{display:block;font:10px/16px "Liberation Mono",monospace;color:#24558c;white-space:nowrap}
ae-search{width:362px;margin-top:6px;flex:none}
.top>button{height:20px;width:26px;margin-top:6px;color:#b4b4b4;flex:none}
table{border-collapse:separate;border-spacing:0;table-layout:fixed;width:680px;flex:none}
th{height:20px;padding:0;border:solid #000;border-width:1px 0;font-weight:400;text-align:left;overflow:hidden;background:#262626}
th div{display:flex;align-items:center;height:16px;padding-left:7px;white-space:nowrap}
th.s div{border-left:1px solid #000;padding-left:6px}
footer{display:flex;align-items:center;height:18px;flex:none;color:#b4b4b4;width:788px;border-top:1px solid #000}
footer .sw{border:1px solid #2d2d2d;background:#1e1e1e;width:259px;height:16px;font-size:12px;color:#8f8f8f}
input{appearance:none;width:49px;height:10px;background:linear-gradient(#444,#444) 0 4px/100% 2px no-repeat}
input::-webkit-slider-thumb{appearance:none;width:10px;height:10px;border:2px solid #999;border-radius:50%;background:#232323}
`, `<div class="tab"><button aria-label="关闭">${ic('close')}</button><span class="chip"></span>合成 1<button aria-label="菜单" style="margin-left:11px">${ic('menu')}</button></div>
<div class="grid"><div class="left">
<div class="top"><div class="time">00000<small>0:00:00:00 (30.00 fps)</small></div><ae-search></ae-search>
<button aria-label="合成微型流程图" style="margin-left:11px">${ic('tree')}</button><button aria-label="隐藏" style="margin-left:7px">${ic('shy')}</button><button aria-label="帧混合">${ic('frames')}</button><button aria-label="运动模糊">${ic('blur')}</button><button aria-label="图表编辑器" style="margin-left:8px">${ic('graph')}</button></div>
<table><colgroup><col style="width:65px"><col style="width:32px"><col style="width:22px"><col style="width:166px"><col style="width:122px"><col style="width:18px"><col style="width:122px"><col style="width:117px"><col style="width:16px"></colgroup>
<thead><tr><th><div style="gap:4px;padding-left:3px">${ic('eye')}${ic('sound')}${ic('dot')}<span style="width:1px"></span>${ic('lock')}</div></th><th class="s"><div style="padding-left:13px">${ic('tag')}</div></th><th class="s"><div style="font-size:10px">#</div></th><th class="s"><div>源名称</div></th><th class="s"><div>模式</div></th><th><div style="font-size:11px">T</div></th><th><div style="font-size:11px">TrkMat</div></th><th class="s"><div>父级和链接</div></th><th class="s"><div></div></th></tr></thead></table>
</div><ae-tracks></ae-tracks></div>
<footer><button aria-label="图层开关" style="margin:0 7px 0 4px">${ic('sw1')}</button><button aria-label="转换控制">${ic('sw2')}</button><button aria-label="入点出点" style="margin:0 7px">${ic('sw3')}</button><button aria-label="渲染时间">${ic('sw4')}</button>
<span style="margin-left:10px;width:74px;white-space:nowrap">帧渲染时间</span><span style="color:#74b6b4;width:129px;white-space:nowrap">0毫秒</span><button class="sw">切换开关/模式</button>
<button aria-label="缩小" style="margin-left:140px">${ic('mtsmall')}</button><input type="range" value="0" aria-label="时间缩放" style="margin:0 11px 0 12px">
<button aria-label="放大">${ic('mtlarge')}</button></footer>`);

define('ae-context-menu', `
:host{display:block;width:186px;border:1px solid #9a9a9a;background:rgba(240,240,240,.7);box-shadow:2px 2px 3px rgba(0,0,0,.6);padding:1px 0 2px;font:12px "Noto Sans","Noto Sans CJK SC",sans-serif;color:#101010}
button{display:flex;justify-content:space-between;width:100%;height:22px;padding:0 11px 0 34px}
hr{border:0;height:1px;background:#979797;margin:4px 2px 2px 30px}
`, ['新建>','-','合成设置...','在项目中显示合成','-','预览(P)>','切换视图布局>','切换 3D 视图>','重命名','-','在基本图形中打开','-','合成流程图','合成微型流程图'].map(t => t==='-' ? '<hr>' : `<button role="menuitem">${t.replace('>','')}${t.endsWith('>')?ic('right'):''}</button>`).join(''));

/* Click highlight with the mouse pointer over it */
define('ae-pointer', `:host{display:block;width:26px;height:32px}svg{display:block}`,
 `<svg width="26" height="32" viewBox="0 0 26 32" aria-hidden="true"><circle cx="12" cy="12" r="12" fill="#8f1912"/><path d="M12 12V0a12 12 0 0112 12z" fill="#c38748"/><path d="M14 15l8.500 9-4.500.3 2.500 4.700-2 1-2.500-4.800L13 28z" fill="#5bb4e8" stroke="#173040" stroke-width=".6"/><path d="M13.500 15l6 5.500-5.500 4z" fill="#c89a80"/></svg>`);

define('ae-app', `
:host{display:flex;flex-direction:column;height:100vh;min-height:600px;position:relative}
main{display:grid;grid-template-columns:minmax(0,1fr) 203px;gap:4px;flex:1;min-height:0}
.work{display:grid;grid-template-columns:317px minmax(0,1fr) 115px;grid-template-rows:minmax(0,1fr) 249px;gap:4px;min-height:0}
ae-timeline{grid-column:1/-1}
.side{display:grid;grid-template-columns:minmax(0,1fr);grid-template-rows:136px 56px minmax(0,1fr) 249px;gap:4px;min-height:0}
ae-context-menu{position:absolute;left:330px;top:564px}
ae-pointer{position:absolute;left:318px;top:806px}
`, `<ae-menubar></ae-menubar><ae-toolbar></ae-toolbar>
<main><div class="work"><ae-project></ae-project><ae-composition></ae-composition><ae-scripts></ae-scripts><ae-timeline></ae-timeline></div>
<div class="side"><ae-info></ae-info><ae-preview></ae-preview><ae-effects></ae-effects><ae-align></ae-align></div></main>
<ae-context-menu></ae-context-menu><ae-pointer></ae-pointer>`);
</script>
</body>
</html>
